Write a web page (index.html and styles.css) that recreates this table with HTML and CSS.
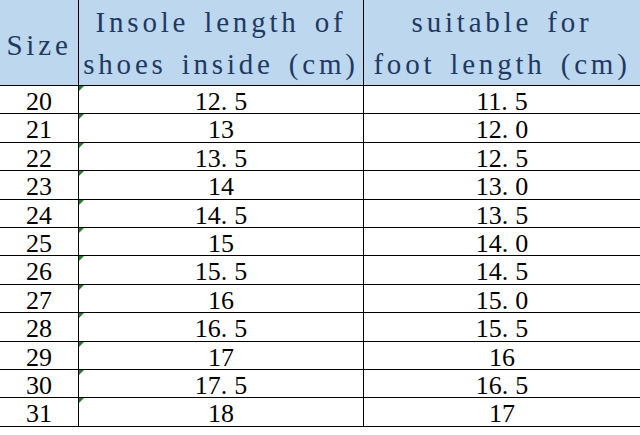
FILE: index.html
```html
<!DOCTYPE html>
<html lang="en">
<head>
<meta charset="utf-8">
<title>Shoe size chart</title>
<link rel="stylesheet" href="styles.css">
</head>
<body>
<div class="sheet">
  <div class="cell head h-size"><p class="txt">Size</p></div>
  <div class="cell head"><p class="txt">Insole length of<br>shoes inside (cm)</p></div>
  <div class="cell head last"><p class="txt">suitable for<br>foot length (cm)</p></div>

  <div class="cell"><p class="txt">20</p></div><div class="cell flag"><p class="txt">12<span class="dot">.</span>5</p></div><div class="cell last"><p class="txt">11<span class="dot">.</span>5</p></div>
  <div class="cell"><p class="txt">21</p></div><div class="cell flag"><p class="txt">13</p></div><div class="cell last"><p class="txt">12<span class="dot">.</span>0</p></div>
  <div class="cell"><p class="txt">22</p></div><div class="cell flag"><p class="txt">13<span class="dot">.</span>5</p></div><div class="cell last"><p class="txt">12<span class="dot">.</span>5</p></div>
  <div class="cell"><p class="txt">23</p></div><div class="cell flag"><p class="txt">14</p></div><div class="cell last"><p class="txt">13<span class="dot">.</span>0</p></div>
  <div class="cell"><p class="txt">24</p></div><div class="cell flag"><p class="txt">14<span class="dot">.</span>5</p></div><div class="cell last"><p class="txt">13<span class="dot">.</span>5</p></div>
  <div class="cell"><p class="txt">25</p></div><div class="cell flag"><p class="txt">15</p></div><div class="cell last"><p class="txt">14<span class="dot">.</span>0</p></div>
  <div class="cell"><p class="txt">26</p></div><div class="cell flag"><p class="txt">15<span class="dot">.</span>5</p></div><div class="cell last"><p class="txt">14<span class="dot">.</span>5</p></div>
  <div class="cell"><p class="txt">27</p></div><div class="cell flag"><p class="txt">16</p></div><div class="cell last"><p class="txt">15<span class="dot">.</span>0</p></div>
  <div class="cell"><p class="txt">28</p></div><div class="cell flag"><p class="txt">16<span class="dot">.</span>5</p></div><div class="cell last"><p class="txt">15<span class="dot">.</span>5</p></div>
  <div class="cell"><p class="txt">29</p></div><div class="cell flag"><p class="txt">17</p></div><div class="cell last"><p class="txt">16</p></div>
  <div class="cell"><p class="txt">30</p></div><div class="cell flag"><p class="txt">17<span class="dot">.</span>5</p></div><div class="cell last"><p class="txt">16<span class="dot">.</span>5</p></div>
  <div class="cell"><p class="txt">31</p></div><div class="cell flag"><p class="txt">18</p></div><div class="cell last"><p class="txt">17</p></div>
</div>
</body>
</html>
```
FILE: styles.css
```css
html, body {
  margin: 0;
  padding: 0;
  background: #ffffff;
}

.sheet {
  display: grid;
  width: 640px;
  grid-template-columns: 79px 285px 1fr;
  grid-template-rows: 86px repeat(12, 28.42px);
  color: #000000;
}

.cell {
  position: relative;
  box-sizing: border-box;
  border-right: 1px solid #000000;
  border-bottom: 1px solid #000000;
  padding-top: 4px;
}

.cell.last {
  border-right: none;
}

.txt {
  margin: 0;
  font-family: "Liberation Serif", "Times New Roman", serif;
  font-size: 26px;
  line-height: 24px;
  text-align: center;
  white-space: nowrap;
}

.head {
  background: #bdd7ee;
  padding-top: 1px;
}

.head .txt {
  color: #1f3a62;
  font-size: 29px;
  line-height: 42px;
  letter-spacing: 3.8px;
  word-spacing: 4px;
}

.h-size {
  padding-top: 24px;
}

.dot {
  margin-right: 7px;
}

.flag::before {
  content: "";
  position: absolute;
  top: 0;
  left: 0;
  width: 0;
  height: 0;
  border-top: 5px solid #2a7a2e;
  border-right: 5px solid transparent;
}
```
